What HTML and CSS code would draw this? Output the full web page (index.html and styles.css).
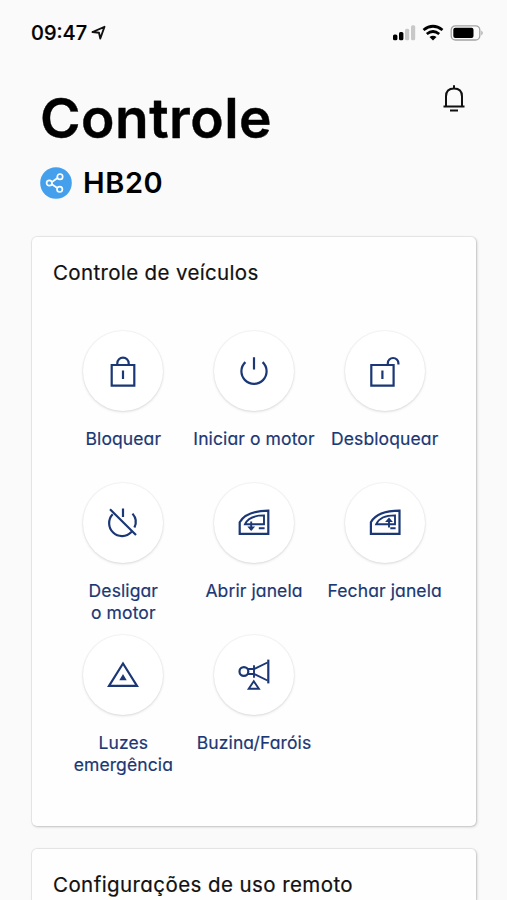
FILE: index.html
```html
<!DOCTYPE html>
<html lang="pt-BR">
<head>
<meta charset="utf-8">
<title>Controle</title>
<link rel="stylesheet" href="styles.css">
</head>
<body>
<div class="status">
  <span class="time">09:47</span>
  <svg class="loc" width="16" height="16" viewBox="0 0 16 16"><path d="M1.5 7 L13.5 1.8 L9.3 13.5 L8 7.8 Z"/></svg>
  <svg class="indicators" width="92" height="18" viewBox="0 0 92 18">
    <rect x="1" y="10.5" width="4.4" height="5.8" rx="1.5"/>
    <rect x="7" y="8" width="4.4" height="8.3" rx="1.5"/>
    <rect class="dim" x="13" y="4.8" width="4.2" height="11.5" rx="1.5"/>
    <rect class="dim" x="19" y="1.3" width="4.2" height="15" rx="1.5"/>
    <path class="wave" d="M31.5 6 Q41 -1.5 50.5 6 M34.8 10 Q41 5.1 47.2 10"/>
    <path d="M37.5 13 Q41 10.4 44.5 13 L41 16.4 Z"/>
    <rect class="shell" x="59.2" y="1.8" width="28.6" height="14.2" rx="4.3"/>
    <rect x="61.3" y="3.8" width="20.2" height="10.3" rx="2"/>
    <path class="cap" d="M89.4 6.4 Q92 8.9 89.4 11.4 Z"/>
  </svg>
</div>
<header class="header">
  <h1>Controle</h1>
  <svg class="bell" width="24" height="28" viewBox="0 0 24 28"><path d="M4 21.5 V11.5 Q4 3.6 12 3.6 Q20 3.6 20 11.5 V21.5 M1.5 21.5 H22.5 M12 4 V0.3 M8 25.5 H16"/></svg>
</header>
<div class="vehicle">
  <svg width="32" height="32" viewBox="0 0 32 32"><circle class="disc" cx="16" cy="16" r="15.8"/><path d="M12 15 L17.5 11 M11.8 17.3 L17 20.8"/><circle cx="9.3" cy="16" r="2.7"/><circle cx="20" cy="9.7" r="2.7"/><circle cx="19.7" cy="22.3" r="2.7"/></svg>
  <span class="model">HB20</span>
</div>
<main>
  <section class="card controls">
    <h2 class="t-controls">Controle de veículos</h2>
    <div class="grid">
      <div class="item"><div class="circle"><svg width="36" height="36" viewBox="0 0 36 36"><path d="M6.7 12 H29.3 V32.6 H6.7 Z M12.3 12 V10.3 A5.7 5.7 0 0 1 23.7 10.3 V12 M18 17.5 V26"/></svg></div><span>Bloquear</span></div>
      <div class="item"><div class="circle"><svg width="36" height="36" viewBox="0 0 36 36"><path d="M9.4 9.1 A12.6 12.6 0 1 0 26.6 9.1 M18 4.3 V16.5"/></svg></div><span>Iniciar o motor</span></div>
      <div class="item"><div class="circle"><svg width="36" height="36" viewBox="0 0 36 36"><path d="M4.3 12 H26.6 V32.6 H4.3 Z M20.8 12 V10.3 A5.3 5.3 0 0 1 31.4 10.3 V11.5 M15.4 17.5 V26"/></svg></div><span>Desbloquear</span></div>
      <div class="item"><div class="circle"><svg width="36" height="36" viewBox="0 0 36 36"><path d="M5 4.3 L31 30 M7.7 9.3 A12.8 12.8 0 0 0 26.4 27.1 M27.5 8.6 A12.8 12.8 0 0 1 29.4 22.6 M18 3.5 V12"/></svg></div><span>Desligar<br>o motor</span></div>
      <div class="item"><div class="circle"><svg width="36" height="36" viewBox="0 0 36 36"><path d="M3.7 28.8 V17.2 C8.5 9 18 5.7 32.3 5.7 V28.8 Z"/><path class="thin" d="M12 19.2 H9 C12 12.5 18.5 10.4 28 10.4 V19.2 H11 M15.2 16.5 V25 M22.8 23.2 H28.6"/><path class="fill" d="M11.3 21.5 H19.1 L15.2 26 Z"/></svg></div><span>Abrir janela</span></div>
      <div class="item"><div class="circle"><svg width="36" height="36" viewBox="0 0 36 36"><path d="M3.9 28.8 V17.2 C8.7 9 18.2 5.7 32.5 5.7 V28.8 Z"/><path class="thin" d="M19.5 19.2 H9.2 C12.2 12.5 18.7 10.4 28 10.4 V19.2 H19 M22 22.5 V14 M23.3 23.2 H28.6"/><path class="fill" d="M18.1 17 H25.9 L22 12.6 Z"/></svg></div><span>Fechar janela</span></div>
      <div class="item"><div class="circle"><svg width="36" height="36" viewBox="0 0 36 36"><path d="M18 6.5 L32 28.8 H4 Z"/><path class="fill" d="M18 17 L21.7 23.3 H14.3 Z"/></svg></div><span>Luzes<br>emergência</span></div>
      <div class="item"><div class="circle"><svg width="36" height="36" viewBox="0 0 36 36"><circle cx="7.9" cy="14.5" r="4.4"/><path class="thin" d="M12 12 H18.2 L31.5 5.5 M12 17 H18.2 L31.5 23.5 M18 8.3 V20.7"/><path d="M32.3 2.6 V26.4"/><path class="thin" d="M17.8 24.2 L22.9 31.8 H12.7 Z"/></svg></div><span>Buzina/Faróis</span></div>
    </div>
  </section>
  <section class="card remote">
    <h2 class="t-remote">Configurações de uso remoto</h2>
  </section>
</main>
</body>
</html>
```
FILE: styles.css
```css
* { box-sizing: border-box; }
html { overflow: hidden; }
body {
  display: flex;
  flex-direction: column;
  margin: 0;
  height: 900px;
  overflow: hidden;
  background: #fafafa;
  color: #000;
  font-family: Inter, "Liberation Sans", sans-serif;
  font-feature-settings: "cv11";
}
svg { display: block; flex: none; }
.status {
  display: flex;
  flex: none;
  align-items: center;
  height: 66px;
  padding: 0 23px 0 31px;
}
.time { font-size: 20px; font-weight: 500; -webkit-text-stroke: .2px #000; }
.loc { margin-left: 4px; fill: none; stroke: #111; stroke-width: 1.9; stroke-linejoin: round; }
.indicators { margin-left: auto; }
.indicators .dim { fill: #c8c8c8; }
.indicators .wave { fill: none; stroke: #000; stroke-width: 2.8; }
.indicators .shell { fill: none; stroke: #a3a3a3; stroke-width: 1.3; }
.indicators .cap { fill: #a3a3a3; }
.header {
  display: flex;
  flex: none;
  justify-content: space-between;
  height: 101px;
  padding: 19px 41px 0 40px;
}
h1 { margin: 0; font-size: 55px; line-height: 66px; font-weight: 600; letter-spacing: .5px; -webkit-text-stroke: .4px #000; }
.bell { fill: none; stroke: #111; stroke-width: 2; }
.vehicle { display: flex; flex: none; align-items: center; gap: 11px; height: 32px; padding-left: 40px; }
.vehicle svg { fill: none; stroke: #fff; stroke-width: 1.7; }
.vehicle .disc { fill: #449fec; stroke: none; }
.model { font-size: 29px; line-height: 32px; font-weight: 600; letter-spacing: .6px; margin-top: -1px; }
main { display: flex; flex: 1; flex-direction: column; gap: 23px; min-height: 0; padding: 38px 31px 0 32px; }
.card {
  padding: 24px 21px 0;
  border-radius: 5px;
  background: #fefefe;
  box-shadow: 0 0 1px 1px rgba(0,0,0,.07), 1px 1px 3px rgba(0,0,0,.18);
}
.controls { flex: none; height: 589px; }
.remote { flex: 1; border-radius: 5px 5px 0 0; }
h2 { margin: 0; color: #111; font-size: 20.5px; line-height: 24px; font-weight: 400; white-space: nowrap; -webkit-text-stroke: .2px #111; }
.t-controls { letter-spacing: .35px; }
.t-remote { letter-spacing: .42px; }
.grid {
  display: grid;
  grid-template-columns: repeat(3, 130.7px);
  grid-auto-rows: 152px;
  justify-content: center;
  margin-top: 46px;
}
.item {
  display: flex;
  flex-direction: column;
  align-items: center;
  color: #1b3775;
  font-size: 17.5px;
  line-height: 22px;
  letter-spacing: .11px;
  text-align: center;
  white-space: nowrap;
  -webkit-text-stroke: .2px #1b3775;
}
.circle {
  display: flex;
  align-items: center;
  justify-content: center;
  width: 80px;
  height: 80px;
  margin-bottom: 17px;
  border-radius: 50%;
  background: #fff;
  box-shadow: 0 0 1px 1px rgba(0,0,0,.03), 0 1px 3px rgba(0,0,0,.13);
}
.circle svg { fill: none; stroke: #1b3775; stroke-width: 2.2; }
.circle .thin { stroke-width: 1.9; }
.circle .fill { fill: #1b3775; stroke: none; }
```
